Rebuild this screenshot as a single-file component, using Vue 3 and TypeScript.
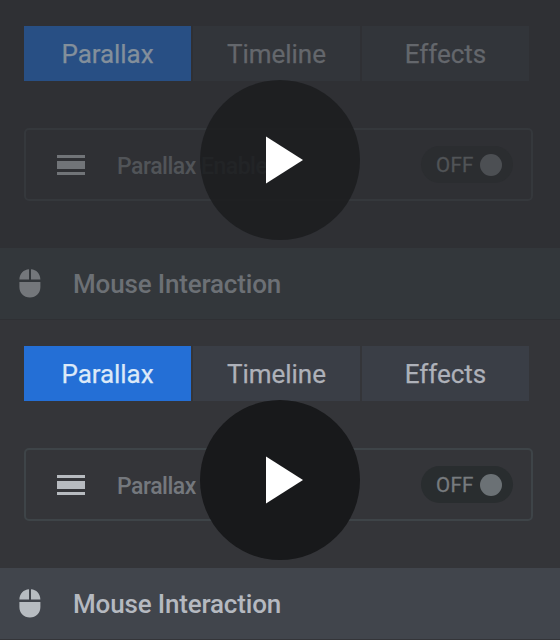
<script setup lang="ts">
interface Panel {
  id: string
  dimmed: boolean
}

const panels: Panel[] = [
  { id: 'idle', dimmed: true },
  { id: 'active', dimmed: false },
]
const tabs: string[] = ['Parallax', 'Timeline', 'Effects']
</script>

<template>
  <main class="stage">
    <section v-for="panel in panels" :key="panel.id" class="panel" :class="{ dimmed: panel.dimmed }">
      <nav class="tabs">
        <button v-for="(tab, i) in tabs" :key="tab" class="tab" :class="{ selected: i === 0 }">
          <span>{{ tab }}</span>
        </button>
      </nav>
      <div class="card">
        <svg class="bars" width="28" height="20" viewBox="0 0 28 20">
          <path d="M0 0h28v3H0zM0 6h28v8H0zM0 17h28v3H0z" />
        </svg>
        <span class="label">Parallax Enabled</span>
        <span class="toggle">
          <span class="state">OFF</span>
          <span class="knob"></span>
        </span>
      </div>
      <footer class="row">
        <svg class="mouse" width="22" height="29" viewBox="0 0 22 29">
          <path d="M10 0.3V10.5H0.4C0.6 4.7 4.6 0.6 10 0.3ZM12 0.3C17.4 0.6 21.2 4.7 21.4 10.5H12ZM0.4 13H21.4V18C21.4 24.3 17 28.5 10.9 28.5S0.4 24.3 0.4 18Z" />
        </svg>
        <span class="title">Mouse Interaction</span>
      </footer>
      <button class="play" aria-label="Play">
        <svg width="160" height="160" viewBox="0 0 160 160">
          <path d="M66 56.5L103 80L66 103.5Z" />
        </svg>
      </button>
    </section>
  </main>
</template>

<style>
body {
  margin: 0;
  background: #343539;
}
</style>

<style scoped>
.stage {
  width: 560px;
  height: 640px;
  overflow: hidden;
  font-family: Roboto, "Liberation Sans", sans-serif;
}
.panel {
  --bg: #343539;
  --tab: #3a3e46;
  --tab-text: #aeb1b9;
  --blue: #246fd6;
  --blue-text: #dce9f8;
  --line: #3e4448;
  --icon: #b7bbc0;
  --label: #74787d;
  --pill: #292d2f;
  --off: #777b7e;
  --knob: #6b7175;
  --row: #41454c;
  --title: #b5b9c0;
  --mouse: #b7bcc1;
  --disc: #18191b;
  position: relative;
  box-sizing: border-box;
  height: 320px;
  padding-top: 26px;
  display: flex;
  flex-direction: column;
  background: var(--bg);
}
.panel.dimmed {
  --bg: #2f3034;
  --tab: #32353a;
  --tab-text: #64676c;
  --blue: #284f84;
  --blue-text: #838f9b;
  --line: #35383c;
  --icon: #717478;
  --label: #515458;
  --pill: #2b2d30;
  --off: #515457;
  --knob: #4c4f53;
  --row: #33373b;
  --title: #6c7075;
  --mouse: #74777b;
  --disc: rgba(28, 29, 31, 0.87);
}
button {
  border: 0;
  padding: 0;
  margin: 0;
  font-family: inherit;
}
.tabs {
  display: grid;
  grid-template-columns: 167px 167px 167px;
  column-gap: 2px;
  height: 55px;
  margin-left: 24px;
}
.tab {
  background: var(--tab);
  color: var(--tab-text);
  font-size: 26px;
  line-height: 55px;
  padding-top: 1px;
  height: 55px;
  overflow: hidden;
  -webkit-text-stroke: 0.25px currentColor;
}
.tab span {
  display: block;
  letter-spacing: -0.05px;
}
.tab.selected {
  background: var(--blue);
  color: var(--blue-text);
}
.card {
  box-sizing: border-box;
  width: 509px;
  height: 73px;
  margin: 47px 0 0 24px;
  padding: 0 18px 0 31px;
  border: 2px solid var(--line);
  border-radius: 5px;
  display: flex;
  align-items: center;
}
.bars {
  fill: var(--icon);
}
.label {
  margin-left: 32px;
  padding-top: 3px;
  color: var(--label);
  font-size: 23px;
  font-weight: 500;
  letter-spacing: -0.5px;
  white-space: nowrap;
}
.toggle {
  box-sizing: border-box;
  width: 92px;
  height: 37px;
  margin-left: auto;
  padding: 0 11px 0 15px;
  border-radius: 19px;
  background: var(--pill);
  display: flex;
  align-items: center;
  justify-content: space-between;
}
.state {
  color: var(--off);
  font-size: 20.5px;
  letter-spacing: 0.3px;
  -webkit-text-stroke: 0.3px currentColor;
}
.knob {
  width: 22px;
  height: 22px;
  border-radius: 50%;
  background: var(--knob);
}
.row {
  height: 71px;
  margin-top: 47px;
  padding-left: 19px;
  display: flex;
  align-items: center;
  background: var(--row);
}
.mouse {
  fill: var(--mouse);
}
.title {
  margin-left: 32px;
  padding-top: 1px;
  color: var(--title);
  font-size: 26px;
  font-weight: 500;
  letter-spacing: -0.17px;
  white-space: nowrap;
}
.play {
  position: absolute;
  left: 200px;
  top: 80px;
  width: 160px;
  height: 160px;
  border-radius: 50%;
  background: var(--disc);
}
.play svg {
  display: block;
  fill: #fff;
}
</style>
